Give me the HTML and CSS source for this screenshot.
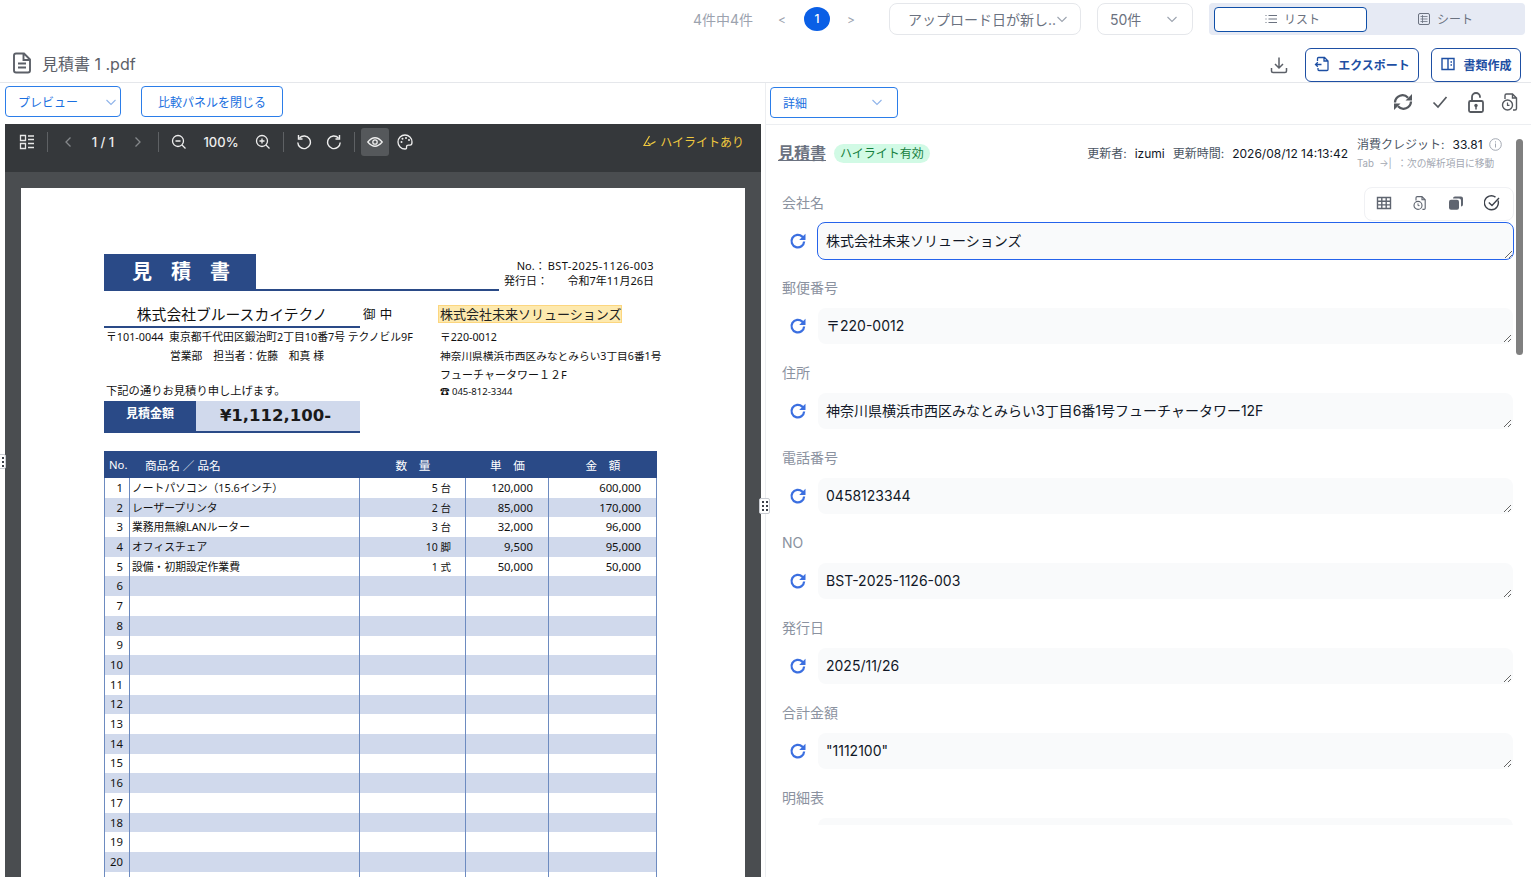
FILE: index.html
```html
<!DOCTYPE html>
<html lang="ja">
<head>
    <meta charset="UTF-8">
    <title>見積書 1 .pdf</title>
    <link rel="stylesheet" href="styles.css">
</head>
<body>

<svg class="icon-defs" width="0" height="0">
    <symbol id="chev" viewBox="0 0 12 12"><path d="M1.5 4l4.5 4.5L10.500 4" fill="none" stroke="currentColor" stroke-width="1.1"/></symbol>
    <symbol id="redo" viewBox="0 0 20 20"><path d="M16.800 10.500a7 7 0 1 1-2.100-5.400L16.800 7.400" fill="none" stroke="currentColor" stroke-width="2.500"/><path d="M18.300 2v7h-7z" fill="currentColor"/></symbol>
    <symbol id="filetime" viewBox="0 0 20 20"><path d="M5 7V3.500q0-1.500 1.500-1.500h6l4 4v10.500q0 1.500-1.500 1.500h-2M12.500 2v4h4" fill="none" stroke="currentColor" stroke-width="1.400"/><circle cx="7.500" cy="13" r="5" fill="none" stroke="currentColor" stroke-width="1.400"/><path d="M7.500 10.500V13.300h2" fill="none" stroke="currentColor" stroke-width="1.200"/></symbol>
</svg>

<header class="topbar">
    <span class="count">4件中4件</span>
    <span class="page-arrow">&lt;</span>
    <span class="page-num">1</span>
    <span class="page-arrow">&gt;</span>
    <div class="select sort"><span>アップロード日が新し..</span><svg class="chev"><use href="#chev"/></svg></div>
    <div class="select per-page"><span>50件</span><svg class="chev"><use href="#chev"/></svg></div>
    <div class="segment">
        <div class="segment-item active">
            <svg width="14" height="14" viewBox="0 0 14 14"><path d="M4.500 3.500H13M4.500 7H13M4.500 10.500H13M1.500 3.500h1M1.500 7h1M1.500 10.500h1" stroke="currentColor" fill="none"/></svg>
            リスト
        </div>
        <div class="segment-item">
            <svg width="14" height="14" viewBox="0 0 14 14"><rect x="1.500" y="1.500" width="11" height="11" rx="1.500" stroke="currentColor" fill="none"/><path d="M3.500 4.500h7M3.500 7h7M3.500 9.500h7M5.500 3v8" stroke="currentColor" fill="none" stroke-width=".8"/></svg>
            シート
        </div>
    </div>
</header>

<div class="filebar">
    <svg class="file-icon" width="20" height="22" viewBox="0 0 20 22"><path d="M4 1.500h8l6 6V18.500q0 2-2 2H4q-2 0-2-2v-15q0-2 2-2zM11.500 1.500v6.500H18M6 11.500h8M6 15.500h8" fill="none" stroke="#5c6068" stroke-width="1.900"/></svg>
    <span class="file-name">見積書 1 .pdf</span>
    <svg class="download" width="18" height="18" viewBox="0 0 18 18"><path d="M9 1.500V11.500M5 8l4 4 4-4M1.500 12v3q0 1.500 1.500 1.500h12q1.500 0 1.500-1.500v-3" fill="none" stroke="#5c6068" stroke-width="1.500"/></svg>
    <button class="action export">
        <svg width="16" height="16" viewBox="0 0 16 16"><path d="M3.500 5V2.500q0-1 1-1h6l3.500 3.500v8.500q0 1-1 1h-8q-1 0-1-1V12M10 1.500V5h4M7.500 8.500H1.500M3.800 6.200L1.500 8.500l2.300 2.300" fill="none" stroke="currentColor" stroke-width="1.300"/></svg>
        エクスポート
    </button>
    <button class="action create">
        <svg width="16" height="16" viewBox="0 0 16 16"><path d="M2 2.500h12v11H2zM8 2.500v11M10.500 6h1.500M10.500 9h1.500" fill="none" stroke="currentColor" stroke-width="1.400"/></svg>
        書類作成
    </button>
</div>

<main class="split">
    <section class="left">
        <div class="pane-head">
            <div class="pane-select preview"><span>プレビュー</span><svg class="chev"><use href="#chev"/></svg></div>
            <button class="pane-btn">比較パネルを閉じる</button>
        </div>

        <div class="viewer">
            <div class="viewer-bar">
                <svg class="vb-grid" width="16" height="16" viewBox="0 0 16 16"><path d="M1.500 1.500h5v5h-5zM1.500 9.500h5v5h-5zM9 2h6M9 5.500h6M9 9.500h6M9 13.500h6" fill="none" stroke="#e8e8e8" stroke-width="1.300"/></svg>
                <i class="vb-sep"></i>
                <svg class="vb-prev" width="10" height="12" viewBox="0 0 10 12"><path d="M7.500 1.500L3 6l4.500 4.500" fill="none" stroke="#85888b" stroke-width="1.300"/></svg>
                <span class="vb-pages">1 / 1</span>
                <svg class="vb-next" width="10" height="12" viewBox="0 0 10 12"><path d="M2.500 1.500L7 6l-4.500 4.500" fill="none" stroke="#85888b" stroke-width="1.300"/></svg>
                <i class="vb-sep"></i>
                <svg class="vb-out" width="16" height="16" viewBox="0 0 16 16"><circle cx="7" cy="7" r="5.500" fill="none" stroke="#eee" stroke-width="1.300"/><path d="M4.500 7h5M11 11l3.500 3.500" stroke="#eee" stroke-width="1.300"/></svg>
                <span class="vb-zoom">100%</span>
                <svg class="vb-in" width="16" height="16" viewBox="0 0 16 16"><circle cx="7" cy="7" r="5.500" fill="none" stroke="#eee" stroke-width="1.300"/><path d="M4.500 7h5M7 4.500v5M11 11l3.500 3.500" stroke="#eee" stroke-width="1.300"/></svg>
                <i class="vb-sep"></i>
                <svg class="vb-rotl" width="16" height="16" viewBox="0 0 16 16"><path d="M3.500 4A6.300 6.300 0 1 1 1.800 8.500" fill="none" stroke="#eee" stroke-width="1.400"/><path d="M2.500 1v4h4" fill="none" stroke="#eee" stroke-width="1.400"/></svg>
                <svg class="vb-rotr" width="16" height="16" viewBox="0 0 16 16"><path d="M12.500 4A6.300 6.300 0 1 0 14.200 8.500" fill="none" stroke="#eee" stroke-width="1.400"/><path d="M13.500 1v4h-4" fill="none" stroke="#eee" stroke-width="1.400"/></svg>
                <i class="vb-sep"></i>
                <span class="vb-eye"><svg width="16" height="12" viewBox="0 0 16 12"><path d="M.8 6Q8-2.500 15.200 6 8 14.500.8 6z" fill="none" stroke="#eee" stroke-width="1.300"/><circle cx="8" cy="6" r="2.200" fill="none" stroke="#eee" stroke-width="1.300"/></svg></span>
                <svg class="vb-palette" width="16" height="16" viewBox="0 0 16 16"><path d="M8 1a7 7 0 0 0 0 14q2 0 1.500-2 0-1.800 2-1.800h1.500q2 0 2-3.200A7 7 0 0 0 8 1z" fill="none" stroke="#eee" stroke-width="1.300"/><circle cx="4.500" cy="8" r="1" fill="#eee"/><circle cx="5.500" cy="4.800" r="1" fill="#eee"/><circle cx="9" cy="4" r="1" fill="#eee"/><circle cx="12" cy="6" r="1" fill="#eee"/></svg>
                <span class="vb-highlight">
                    <svg width="14" height="12" viewBox="0 0 14 12"><path d="M6.500 1L1 10.500h6.500M4.800 7.500q1.500 2.500 3.200 1.500 2-1 4.500-2.500" fill="none" stroke="#f0c93f" stroke-width="1.200"/></svg>
                    ハイライトあり
                </span>
            </div>

            <div class="viewer-body">
                <article class="sheet">
                    <div class="doc-top">
                        <div class="doc-title-line"><h1 class="doc-title">見積書</h1></div>
                        <div class="doc-no">
                            <div class="doc-no-row first"><span>No.：</span><span class="doc-no-code">BST-2025-1126-003</span></div>
                            <div class="doc-no-row"><span>発行日：</span><span>令和7年11月26日</span></div>
                        </div>
                    </div>

                    <div class="doc-parties">
                        <div class="doc-from">
                            <div class="doc-customer"><span class="doc-customer-name">株式会社ブルースカイテクノ</span><span class="doc-honor">御 中</span></div>
                            <p class="doc-addr">〒101-0044&nbsp; 東京都千代田区鍛治町2丁目10番7号 テクノビル9F</p>
                            <p class="doc-addr doc-person">営業部　担当者：佐藤　和真 様</p>
                            <p class="doc-lead">下記の通りお見積り申し上げます。</p>
                            <div class="doc-amount"><span class="doc-amount-label">見積金額</span><span class="doc-amount-value">¥1,112,100-</span></div>
                        </div>
                        <div class="doc-to">
                            <div class="doc-to-name"><mark>株式会社未来ソリューションズ</mark></div>
                            <p class="doc-to-line">〒220-0012</p>
                            <p class="doc-to-line">神奈川県横浜市西区みなとみらい3丁目6番1号</p>
                            <p class="doc-to-line big">フューチャータワー１２F</p>
                            <p class="doc-to-tel">☎ 045-812-3344</p>
                        </div>
                    </div>

                    <table class="doc-table">
                        <colgroup><col class="c-no"><col class="c-name"><col class="c-qty"><col class="c-price"><col class="c-total"></colgroup>
                        <thead>
                            <tr><th class="th-no">No.</th><th class="th-name">商品名 ／ 品名</th><th>数　量</th><th>単　価</th><th>金　額</th></tr>
                        </thead>
                        <tbody>
                            <tr><td>1</td><td>ノートパソコン（15.6インチ）</td><td>5 台</td><td>120,000</td><td>600,000</td></tr>
                            <tr><td>2</td><td>レーザープリンタ</td><td>2 台</td><td>85,000</td><td>170,000</td></tr>
                            <tr><td>3</td><td>業務用無線LANルーター</td><td>3 台</td><td>32,000</td><td>96,000</td></tr>
                            <tr><td>4</td><td>オフィスチェア</td><td>10 脚</td><td>9,500</td><td>95,000</td></tr>
                            <tr><td>5</td><td>設備・初期設定作業費</td><td>1 式</td><td>50,000</td><td>50,000</td></tr>
                            <tr><td>6</td><td></td><td></td><td></td><td></td></tr>
                            <tr><td>7</td><td></td><td></td><td></td><td></td></tr>
                            <tr><td>8</td><td></td><td></td><td></td><td></td></tr>
                            <tr><td>9</td><td></td><td></td><td></td><td></td></tr>
                            <tr><td>10</td><td></td><td></td><td></td><td></td></tr>
                            <tr><td>11</td><td></td><td></td><td></td><td></td></tr>
                            <tr><td>12</td><td></td><td></td><td></td><td></td></tr>
                            <tr><td>13</td><td></td><td></td><td></td><td></td></tr>
                            <tr><td>14</td><td></td><td></td><td></td><td></td></tr>
                            <tr><td>15</td><td></td><td></td><td></td><td></td></tr>
                            <tr><td>16</td><td></td><td></td><td></td><td></td></tr>
                            <tr><td>17</td><td></td><td></td><td></td><td></td></tr>
                            <tr><td>18</td><td></td><td></td><td></td><td></td></tr>
                            <tr><td>19</td><td></td><td></td><td></td><td></td></tr>
                            <tr><td>20</td><td></td><td></td><td></td><td></td></tr>
                            <tr><td></td><td></td><td></td><td></td><td></td></tr>
                        </tbody>
                    </table>
                </article>
            </div>
        </div>
        <span class="grip grip-left"><i></i></span>
    </section>

    <section class="right">
        <span class="grip grip-mid"><i></i></span>
        <div class="pane-head detail-head">
            <div class="pane-select detail"><span>詳細</span><svg class="chev"><use href="#chev"/></svg></div>
            <div class="detail-tools">
                <svg width="20" height="18" viewBox="0 0 20 18"><path d="M2 9.500a7.500 7.500 0 0 1 13-4.800M18 8.500a7.500 7.500 0 0 1-13 4.800" fill="none" stroke="#55595f" stroke-width="2.300"/><path d="M19 1v6.500h-6.500zM1 17v-6.500h6.500z" fill="#55595f"/></svg>
                <svg width="16" height="14" viewBox="0 0 16 14"><path d="M1.500 7.500l4.500 4.500 8.500-10" fill="none" stroke="#55595f" stroke-width="1.700"/></svg>
                <svg width="18" height="21" viewBox="0 0 18 21"><path d="M5 8.500V5a4 4 0 0 1 8 0v.8" fill="none" stroke="#55595f" stroke-width="1.800"/><rect x="2" y="9" width="14" height="11" rx="1.500" fill="none" stroke="#55595f" stroke-width="1.800"/><circle cx="9" cy="13.500" r="1.700" fill="#55595f"/><path d="M9 13.500v4" stroke="#55595f" stroke-width="1.500"/></svg>
                <svg class="tool-file" width="20" height="20"><use href="#filetime"/></svg>
            </div>
        </div>

        <div class="detail-body">
            <div class="summary">
                <span class="summary-title">見積書</span>
                <span class="badge">ハイライト有効</span>
                <div class="summary-meta">
                    <span>更新者:</span><b>izumi</b>
                    <span>更新時間:</span><b>2026/08/12 14:13:42</b>
                </div>
                <div class="credits">
                    <div class="credits-top">
                        <span>消費クレジット:</span><b>33.81</b>
                        <svg width="13" height="13" viewBox="0 0 13 13"><circle cx="6.500" cy="6.500" r="5.800" fill="none" stroke="#a3a8b2"/><path d="M6.500 5.500v4M6.500 3.300v1.200" stroke="#a3a8b2"/></svg>
                    </div>
                    <div class="credits-hint">Tab &nbsp;→| &nbsp;：次の解析項目に移動</div>
                </div>
            </div>

            <div class="field-tools">
                <svg width="16" height="14" viewBox="0 0 16 14"><path d="M1.500 1.500h13v11h-13zM1.500 5.200h13M1.500 8.900h13M5.800 1.500v11M10.200 1.500v11" fill="none" stroke="#5f6570" stroke-width="1.400"/></svg>
                <svg class="tool-time" width="16" height="16"><use href="#filetime"/></svg>
                <svg width="16" height="16" viewBox="0 0 16 16"><path d="M5 3.500q0-2 2-2h6q2 0 2 2v6q0 2-2 2V5.500q0-2-2-2z" fill="#5f6570"/><rect x="1" y="4.800" width="10" height="10" rx="2" fill="#5f6570"/></svg>
                <svg width="16" height="16" viewBox="0 0 16 16"><path d="M14 5.500a7 7 0 1 1-2.500-3.400" fill="none" stroke="#3d424b" stroke-width="1.400"/><path d="M4.800 7.500L8 10.500 15 3" fill="none" stroke="#3d424b" stroke-width="1.400"/></svg>
            </div>

            <div class="field">
                <label>会社名</label>
                <div class="field-row"><svg class="redo"><use href="#redo"/></svg><textarea class="focused" rows="1">株式会社未来ソリューションズ</textarea></div>
            </div>
            <div class="field">
                <label>郵便番号</label>
                <div class="field-row"><svg class="redo"><use href="#redo"/></svg><textarea rows="1">〒220-0012</textarea></div>
            </div>
            <div class="field">
                <label>住所</label>
                <div class="field-row"><svg class="redo"><use href="#redo"/></svg><textarea rows="1">神奈川県横浜市西区みなとみらい3丁目6番1号フューチャータワー12F</textarea></div>
            </div>
            <div class="field">
                <label>電話番号</label>
                <div class="field-row"><svg class="redo"><use href="#redo"/></svg><textarea rows="1">0458123344</textarea></div>
            </div>
            <div class="field">
                <label>NO</label>
                <div class="field-row"><svg class="redo"><use href="#redo"/></svg><textarea rows="1">BST-2025-1126-003</textarea></div>
            </div>
            <div class="field">
                <label>発行日</label>
                <div class="field-row"><svg class="redo"><use href="#redo"/></svg><textarea rows="1">2025/11/26</textarea></div>
            </div>
            <div class="field">
                <label>合計金額</label>
                <div class="field-row"><svg class="redo"><use href="#redo"/></svg><textarea rows="1">"1112100"</textarea></div>
            </div>
            <div class="field">
                <label>明細表</label>
                <div class="field-row"><div class="field-cut"></div></div>
            </div>
            <span class="scroll-thumb"></span>
        </div>
    </section>
</main>

</body>
</html>
```

FILE: styles.css
```css
* {
    box-sizing: border-box;
}
html, body {
    height: 100%;
}
body {
    margin: 0;
    display: flex;
    flex-direction: column;
    overflow: hidden;
    background: #ffffff;
    color: #111827;
    font-family: Inter, "Noto Sans CJK JP", sans-serif;
    font-size: 14px;
}
.icon-defs {
    position: absolute;
}
button {
    font-family: inherit;
    background: #ffffff;
    cursor: pointer;
}
.chev {
    width: 12px;
    height: 12px;
    flex: none;
}

/* top bar */
.topbar {
    height: 42px;
    flex: none;
    display: flex;
    align-items: center;
    padding: 0 6px 4px 0;
}
.count {
    margin-left: auto;
    color: #9ca3af;
    font-size: 14px;
}
.page-arrow {
    width: 14px;
    text-align: center;
    color: #9ca3af;
    font-size: 12px;
}
.count + .page-arrow {
    margin-left: 22px;
}
.page-num {
    width: 26px;
    height: 24px;
    margin: 0 14px 0 15px;
    border-radius: 50%;
    background: #0a5fe6;
    color: #ffffff;
    font-size: 12px;
    font-weight: 500;
    line-height: 24px;
    text-align: center;
}
.select {
    height: 32px;
    display: flex;
    align-items: center;
    justify-content: space-between;
    border: 1px solid #e5e7eb;
    border-radius: 8px;
    color: #6b7280;
    font-size: 14px;
    white-space: nowrap;
}
.select .chev {
    color: #9ca3af;
}
.sort {
    width: 192px;
    margin-left: 31px;
    padding: 0 13px 0 18px;
}
.per-page {
    width: 96px;
    margin-left: 16px;
    padding: 0 14px 0 12px;
}
.segment {
    width: 316px;
    height: 32px;
    margin-left: 16px;
    padding: 4px 5px 3px;
    display: flex;
    background: #e6eaf4;
    border-radius: 4px;
}
.segment-item {
    flex: 1;
    display: flex;
    align-items: center;
    justify-content: center;
    gap: 6px;
    padding: 0 0 2px 3px;
    border: 1px solid transparent;
    border-radius: 4px;
    color: #6b7280;
    font-size: 12px;
}
.segment-item.active {
    background: #ffffff;
    border-color: #0f4fa8;
}

/* file name bar */
.filebar {
    height: 41px;
    flex: none;
    display: flex;
    align-items: center;
    padding: 6px 10px 0 12px;
    border-bottom: 1px solid #e5e7eb;
}
.file-icon {
    margin-top: -4px;
}
.file-name {
    margin-top: -5px;
    margin-left: 10px;
    color: #5c6068;
    font-size: 16px;
}
.download {
    margin-left: auto;
}
.action {
    height: 34px;
    display: flex;
    align-items: center;
    justify-content: center;
    gap: 8px;
    padding: 0 0 2px;
    border: 1px solid #1e4fa3;
    border-radius: 6px;
    color: #1e4fa3;
    font-size: 12px;
    font-weight: 700;
}
.export {
    width: 114px;
    margin-left: 17px;
}
.create {
    width: 90px;
    margin-left: 12px;
    gap: 7px;
}

/* split panes */
.split {
    flex: 1;
    min-height: 0;
    display: flex;
}
.left {
    position: relative;
    width: 765px;
    flex: none;
    display: flex;
    flex-direction: column;
}
.right {
    position: relative;
    flex: 1;
    min-width: 0;
    display: flex;
    flex-direction: column;
    border-left: 1px solid #eceef1;
}
.pane-head {
    height: 41px;
    flex: none;
    display: flex;
    align-items: center;
    gap: 20px;
    padding: 0 0 4px 5px;
}
.pane-select {
    height: 31px;
    display: flex;
    align-items: center;
    justify-content: space-between;
    border: 1px solid #2b7de9;
    border-radius: 4px;
    padding: 0 8px 0 12px;
    color: #1a6fe0;
    font-size: 12px;
}
.pane-select .chev {
    color: #8fb4ea;
}
.preview {
    width: 116px;
    padding-right: 3px;
}
.pane-btn {
    width: 142px;
    height: 31px;
    padding: 0;
    border: 1px solid #2b7de9;
    border-radius: 4px;
    color: #1a6fe0;
    font-size: 12px;
}
.grip {
    position: absolute;
    z-index: 5;
    display: block;
    background: #ffffff;
    border: 1px solid #c9ccd2;
    border-radius: 2px;
}
.grip i {
    display: block;
    width: 8px;
    height: 12px;
    margin: 1px 0 0 .5px;
    background: radial-gradient(circle, #3d424b 1px, transparent 1.200px) 0 0 / 4px 4px;
}
.grip-left {
    left: -5px;
    top: 371px;
    width: 11px;
    height: 15px;
}
.grip-mid {
    left: -7px;
    top: 415px;
    width: 11px;
    height: 16px;
}

/* pdf viewer */
.viewer {
    flex: 1;
    min-height: 0;
    width: 756px;
    margin-left: 5px;
    display: flex;
    flex-direction: column;
    background: #4a4d50;
}
.viewer-bar {
    height: 48px;
    flex: none;
    display: flex;
    align-items: center;
    padding: 0 17px 12px 14px;
    background: #35383b;
    color: #eeeeee;
    font-size: 13px;
}
.vb-sep {
    width: 1px;
    height: 20px;
    background: #5e6164;
}
.vb-grid {
    margin-right: 12px;
}
.vb-prev {
    margin-left: 15px;
}
.vb-pages {
    width: 60px;
    text-align: center;
    font-weight: 500;
}
.vb-next {
    margin-right: 15px;
}
.vb-out {
    margin-left: 12px;
}
.vb-zoom {
    width: 68px;
    text-align: center;
    font-weight: 500;
}
.vb-in {
    margin-right: 12px;
}
.vb-rotl {
    margin-left: 12px;
}
.vb-rotr {
    margin-left: 14px;
    margin-right: 12px;
}
.vb-eye {
    width: 28px;
    height: 28px;
    margin-left: 6px;
    display: flex;
    align-items: center;
    justify-content: center;
    background: #55585b;
    border-radius: 3px;
}
.vb-palette {
    margin-left: 8px;
}
.vb-highlight {
    margin-left: auto;
    margin-top: -2px;
    display: flex;
    align-items: center;
    gap: 3px;
    color: #f0c93f;
    font-size: 12px;
}
.viewer-body {
    flex: 1;
    min-height: 0;
    overflow: hidden;
    padding: 16px 16px 0;
}

/* the estimate sheet itself */
.sheet {
    height: 760px;
    padding: 66px 88px 0 83px;
    background: #ffffff;
    color: #111111;
    font-family: "Noto Sans", "Noto Sans CJK JP", sans-serif;
}
.sheet p {
    margin: 0;
}
.doc-top {
    display: flex;
}
.doc-title-line {
    width: 395px;
    flex: none;
    border-bottom: 2px solid #2a4a87;
}
.doc-title {
    width: 152px;
    height: 35px;
    margin: 0;
    padding-left: 28px;
    background: #2a4a87;
    color: #ffffff;
    font-size: 20px;
    font-weight: 700;
    line-height: 36px;
    letter-spacing: 19px;
    white-space: nowrap;
    overflow: hidden;
}
.doc-no {
    flex: 1;
    padding-top: 4px;
    font-size: 11px;
    line-height: 15px;
    white-space: nowrap;
}
.doc-no-row {
    display: flex;
    justify-content: space-between;
    padding: 0 3px 0 5px;
}
.doc-no-row.first {
    justify-content: flex-end;
    gap: 2px;
}
.doc-no-code {
    letter-spacing: .45px;
}
.doc-parties {
    display: flex;
    margin-top: 14px;
}
.doc-from {
    width: 334px;
    flex: none;
}
.doc-customer {
    display: flex;
    height: 23px;
}
.doc-customer-name {
    width: 256px;
    flex: none;
    border-bottom: 2px solid #2a4a87;
    font-size: 14.800px;
    line-height: 18px;
    text-align: center;
}
.doc-honor {
    margin-left: 3px;
    font-size: 12.500px;
    line-height: 20px;
    letter-spacing: .5px;
    white-space: nowrap;
}
.doc-addr {
    padding-left: 2px;
    font-size: 10.800px;
    line-height: 18px;
    white-space: nowrap;
}
.doc-person {
    margin-top: 1px !important;
    padding-left: 66px;
}
.doc-lead {
    margin-top: 18px !important;
    padding-left: 2px;
    font-size: 11.300px;
    line-height: 16px;
}
.doc-amount {
    width: 256px;
    height: 32px;
    margin-top: 2px;
    display: flex;
    background: #d0d9ec;
    border-bottom: 2px solid #2a4a87;
}
.doc-amount-label {
    width: 92px;
    height: 31px;
    background: #2a4a87;
    color: #ffffff;
    font-size: 12px;
    font-weight: 700;
    line-height: 26px;
    text-align: center;
}
.doc-amount-value {
    flex: 1;
    padding-right: 5px;
    color: #1a1a1a;
    font-family: "DejaVu Sans", sans-serif;
    font-size: 16.500px;
    font-weight: 700;
    line-height: 30px;
    text-align: center;
}
.doc-to {
    flex: 1;
    min-width: 0;
    white-space: nowrap;
}
.doc-to-name {
    height: 23px;
    font-size: 13px;
    line-height: 18px;
}
.doc-to-name mark {
    padding: 0 1px 0 2px;
    background: #fde9ae;
    box-shadow: inset 0 0 0 1px #fcd67f;
    color: #222222;
}
.doc-to-line {
    padding-left: 2px;
    font-size: 10.700px;
    line-height: 19px;
}
.doc-to-line.big {
    margin-top: -1px !important;
    font-size: 11px;
}
.doc-to-tel {
    padding-left: 2px;
    font-size: 9.500px;
    line-height: 15px;
}
.doc-table {
    width: 553px;
    margin-top: 18px;
    table-layout: fixed;
    border-collapse: separate;
    border-spacing: 0;
    font-size: 11.300px;
}
.c-no { width: 26px; }
.c-name { width: 230px; }
.c-qty { width: 106px; }
.c-price { width: 83px; }
.c-total { width: 108px; }
.doc-table th {
    height: 27px;
    padding: 0;
    background: #2a4a87;
    color: #ffffff;
    font-weight: 400;
    font-size: 11.600px;
    white-space: nowrap;
}
.doc-table .th-no {
    text-align: left;
    padding-left: 5px;
    font-size: 11.300px;
}
.doc-table .th-name {
    text-align: left;
    padding-left: 15px;
}
.doc-table td {
    height: 19.700px;
    padding: 0;
    border-right: 1px solid #6d8bc0;
    line-height: 12px;
    text-align: right;
    white-space: nowrap;
    overflow: hidden;
}
.doc-table td:first-child {
    padding-right: 6px;
    border-left: 1px solid #6d8bc0;
    background: inherit;
}
.doc-table td:nth-child(2) {
    padding-left: 2px;
    text-align: left;
    font-size: 10.800px;
}
.doc-table td:nth-child(3) {
    padding-right: 14px;
    font-size: 10.500px;
}
.doc-table td:nth-child(4) {
    padding-right: 15px;
}
.doc-table td:nth-child(5) {
    padding-right: 15px;
}
.doc-table tbody tr:nth-child(even) {
    background: #d0d9ec;
}

/* detail pane */
.detail-head {
    justify-content: space-between;
    padding: 0 11px 3px 4px;
    height: 42px;
    border-bottom: 1px solid #eceef1;
}
.detail {
    width: 128px;
    padding-right: 14px;
}
.detail-tools {
    display: flex;
    align-items: center;
    gap: 19px;
    color: #55595f;
}
.tool-file {
    margin-left: -4px;
}
.detail-body {
    position: relative;
    flex: none;
    height: 700px;
    overflow: hidden;
}
.summary {
    height: 68px;
    display: flex;
    align-items: flex-start;
    padding: 0 29px 0 12px;
}
.summary-title {
    margin-top: 18px;
    color: #6b7280;
    font-size: 16px;
    font-weight: 700;
    line-height: 20px;
    text-decoration: underline;
}
.badge {
    margin: 19px 0 0 8px;
    height: 19px;
    padding: 0 6px;
    background: #d1fae5;
    border-radius: 10px;
    color: #15803d;
    font-size: 12px;
    line-height: 19px;
    white-space: nowrap;
}
.summary-meta {
    margin: 20px 0 0 auto;
    display: flex;
    gap: 8px;
    color: #4b5563;
    font-size: 12px;
    line-height: 17px;
    white-space: nowrap;
}
.summary-meta b {
    color: #111827;
    font-weight: 400;
}
.credits {
    width: 145px;
    flex: none;
    margin: 11px 0 0 9px;
    white-space: nowrap;
}
.credits-top {
    display: flex;
    align-items: center;
    gap: 4px;
    color: #4b5563;
    font-size: 12px;
    line-height: 17px;
}
.credits-top b {
    color: #111827;
    font-weight: 400;
    margin-left: 4px;
}
.credits-top svg {
    margin-left: 2px;
}
.credits-hint {
    margin-top: 4px;
    color: #a3a8b2;
    font-size: 9.700px;
    line-height: 13px;
}
.field-tools {
    position: absolute;
    z-index: 2;
    top: 62px;
    left: 598px;
    width: 150px;
    height: 34px;
    display: flex;
    align-items: center;
    justify-content: space-between;
    padding: 0 13px 2px 11px;
    background: #ffffff;
    border: 1px solid #f0f1f4;
    border-radius: 8px;
}
.tool-time {
    color: #5f6570;
}
.field {
    height: 85px;
    padding-left: 16px;
}
.field label {
    display: block;
    height: 30px;
    color: #8b92a0;
    font-size: 14px;
    line-height: 20px;
}
.field-row {
    display: flex;
    align-items: flex-start;
    gap: 11px;
}
.redo {
    width: 18px;
    height: 18px;
    flex: none;
    margin: 9px 0 0 7px;
    color: #3b6fe0;
}
.field textarea {
    width: 695px;
    height: 36px;
    flex: none;
    padding: 7px;
    background: #f9fafb;
    border: 1px solid transparent;
    border-radius: 8px;
    color: #111827;
    font-family: inherit;
    font-size: 14px;
    line-height: 20px;
    outline: none;
    overflow: hidden;
}
.field textarea.focused {
    width: 697px;
    height: 38px;
    margin: -1px 0 -1px -1px;
    padding: 8px;
    border-color: #2563eb;
}
.field-cut {
    width: 695px;
    margin-left: 36px;
    height: 36px;
    background: #f9fafb;
    border-radius: 8px;
}
.scroll-thumb {
    position: absolute;
    top: 14px;
    right: 8px;
    width: 7px;
    height: 216px;
    background: #808080;
    border-radius: 4px;
}
```
